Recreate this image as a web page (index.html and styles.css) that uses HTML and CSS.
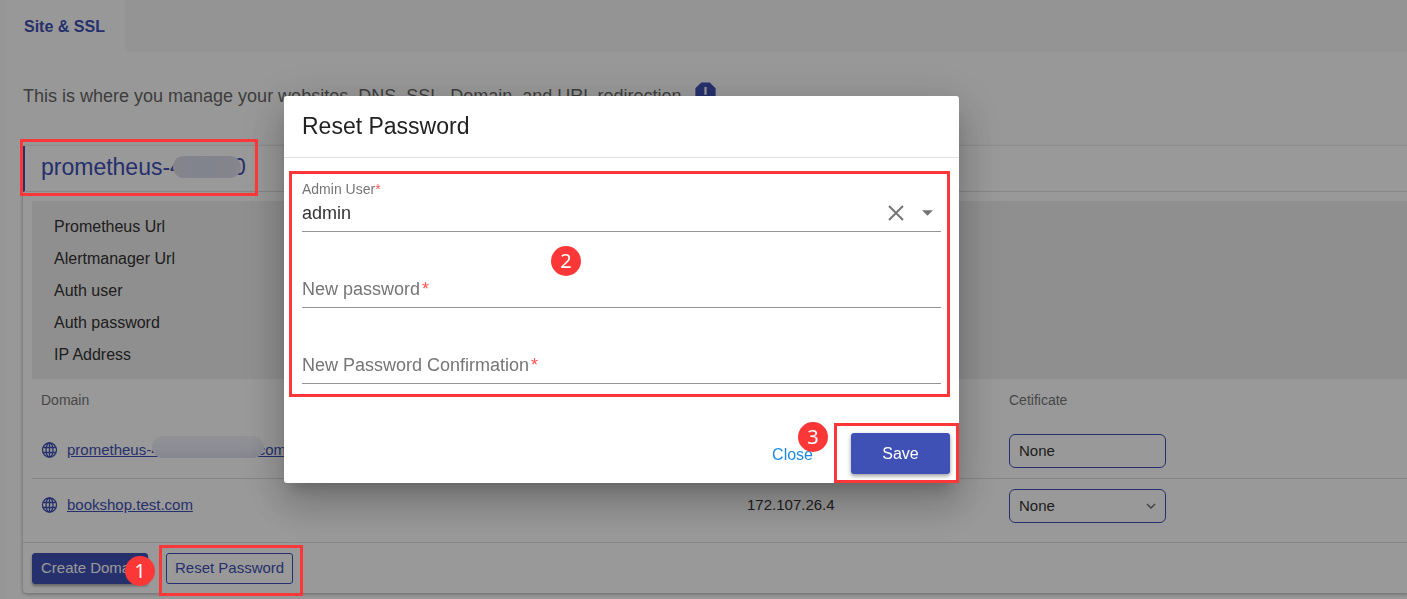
FILE: index.html
```html
<!DOCTYPE html>
<html lang="en">
<head>
<meta charset="utf-8">
<title>Site &amp; SSL</title>
<link rel="stylesheet" href="styles.css">
</head>
<body>
<svg class="sprite" aria-hidden="true">
  <symbol id="globe" viewBox="0 0 16 16">
    <g fill="none" stroke="currentColor" stroke-width="1.3">
      <circle cx="8" cy="8" r="7"/>
      <ellipse cx="8" cy="8" rx="3.5" ry="7"/>
      <path d="M8 1v14M1.6 5.5h12.8M1.6 10.5h12.8"/>
    </g>
  </symbol>
</svg>

<div class="page">
  <nav class="tabs"><a class="tab" href="#site">Site &amp; SSL</a></nav>
  <main class="content">
    <p class="intro">This is where you manage your websites, DNS, SSL, Domain, and URL redirection.
      <svg class="intro-icon" viewBox="0 0 24 24" aria-hidden="true"><path fill="currentColor" fill-rule="evenodd" d="M15.73 3H8.27L3 8.27v7.46L8.27 21h7.46L21 15.73V8.27L15.73 3zM12 18.3a1.3 1.3 0 1 1 0-2.6 1.3 1.3 0 0 1 0 2.6zM13 14h-2V7h2v7z"/></svg>
    </p>

    <section class="card">
      <header class="card-head">
        <h2 class="card-title">prometheus-4<span class="smudge smudge-title"></span>0</h2>
        <span class="mark mark-title"></span>
      </header>
      <div class="card-body">
        <ul class="info">
          <li>Prometheus Url</li>
          <li>Alertmanager Url</li>
          <li>Auth user</li>
          <li>Auth password</li>
          <li>IP Address</li>
        </ul>
        <table class="domains">
          <colgroup><col class="col-domain"><col class="col-ip"><col></colgroup>
          <thead>
            <tr><th>Domain</th><th></th><th>Cetificate</th></tr>
          </thead>
          <tbody>
            <tr>
              <td><div class="site"><svg class="globe"><use href="#globe"/></svg><a href="#prometheus">prometheus-4<span class="smudge smudge-link"></span>.com</a></div></td>
              <td></td>
              <td><select class="cert" aria-label="Certificate for prometheus"><option>None</option></select></td>
            </tr>
            <tr>
              <td><div class="site"><svg class="globe"><use href="#globe"/></svg><a href="#bookshop">bookshop.test.com</a></div></td>
              <td><div class="ip">172.107.26.4</div></td>
              <td><div class="cert-wrap"><select class="cert" aria-label="Certificate for bookshop.test.com"><option>None</option></select><svg class="chevron" viewBox="0 0 10 6" aria-hidden="true"><path d="M1 1l4 4 4-4" fill="none" stroke="currentColor" stroke-width="1.3"/></svg></div></td>
            </tr>
          </tbody>
        </table>
      </div>
      <footer class="card-foot">
        <div class="anchor">
          <button class="btn btn-fill" type="button">Create Domain</button>
          <span class="badge badge-one">1</span>
        </div>
        <div class="anchor">
          <button class="btn btn-line" type="button">Reset Password</button>
          <span class="mark mark-reset"></span>
        </div>
      </footer>
    </section>
  </main>
</div>

<div class="overlay">
  <form class="dialog" role="dialog" aria-labelledby="dialog-title">
    <h1 class="dialog-title" id="dialog-title">Reset Password</h1>
    <div class="dialog-body">
      <div class="field">
        <label class="label" for="user">Admin User<span class="star">*</span></label>
        <select class="control" id="user"><option>admin</option></select>
        <div class="field-icons">
          <button class="clear" type="button" aria-label="Clear"><svg viewBox="0 0 16 16"><path d="M1 1l14 14M15 1L1 15" stroke="currentColor" stroke-width="2"/></svg></button>
          <svg class="caret" viewBox="0 0 12 6" aria-hidden="true"><path d="M0 0h12L6 6z" fill="currentColor"/></svg>
        </div>
      </div>
      <div class="field">
        <label class="label label-rest" for="pass">New password<span class="star">*</span></label>
        <input class="control" id="pass" type="password">
      </div>
      <div class="field">
        <label class="label label-rest" for="confirm">New Password Confirmation<span class="star">*</span></label>
        <input class="control" id="confirm" type="password">
      </div>
      <span class="mark mark-fields"></span>
      <span class="badge badge-two">2</span>
    </div>
    <div class="dialog-foot">
      <div class="anchor">
        <button class="close" type="button">Close</button>
        <span class="badge badge-three">3</span>
      </div>
      <div class="anchor">
        <button class="save" type="submit">Save</button>
        <span class="mark mark-save"></span>
      </div>
    </div>
  </form>
</div>
</body>
</html>
```
FILE: styles.css
```css
:root {
  --primary: #3f51b5;
  --mark: #fc3737;
}

* { box-sizing: border-box; }

body {
  margin: 0;
  overflow: hidden;
  background: #fafafa;
  color: #333;
  font: 15px/20px "Liberation Sans", Arial, sans-serif;
}

h1, h2, p, ul { margin: 0; padding: 0; font-weight: 400; }
button, input, select { font: inherit; color: inherit; }
svg { display: block; }
.sprite { position: absolute; width: 0; height: 0; }

.page {
  min-height: 100vh;
  margin-left: 5px;
  background: #fefefe;
}

.tabs { display: flex; background: #f7f7f7; }

.tab {
  padding: 17px 20px 15px 19px;
  background: #fefefe;
  border-radius: 4px 4px 0 0;
  color: var(--primary);
  font-size: 16px;
  font-weight: 700;
  text-decoration: none;
}

.content { padding: 30px 0 6px 18px; }

.intro {
  display: flex;
  align-items: center;
  gap: 5px;
  height: 27px;
  margin-bottom: 37px;
  color: #666;
  font-size: 18px;
  white-space: nowrap;
}

.intro-icon { width: 27px; height: 27px; margin-bottom: 6px; color: var(--primary); }

.card {
  border-radius: 4px 0 0 4px;
  background: #fff;
  box-shadow: 0 1px 3px 1px rgba(0, 0, 0, .22);
}

.card-head {
  position: relative;
  padding: 6px 16px 8px;
  border-bottom: 1px solid #e0e0e0;
  border-left: 2px solid var(--primary);
}

.card-title {
  color: var(--primary);
  font-size: 23px;
  line-height: 31px;
}

.smudge {
  position: relative;
  display: inline-block;
  vertical-align: middle;
}

.smudge-title {
  width: 68px;
  height: 22px;
  margin: -4px -8px 0 -10px;
  border-radius: 11px;
  background: linear-gradient(90deg, #dcdeec, #d8dbeb 50%, #e0deec);
}

.smudge-link {
  width: 112px;
  height: 22px;
  margin: -8px -10px 0 -8px;
  border-radius: 11px;
  background: linear-gradient(#f2f2fa, #eaebf7 60%, #dcdff0);
}

.card-body { padding: 9px 0 9px 9px; }

.info {
  padding: 10px 22px 8px;
  background: #efefef;
  font-size: 16px;
  line-height: 32px;
  list-style: none;
}

.domains {
  width: 100%;
  border-collapse: separate;
  border-spacing: 0;
  table-layout: fixed;
}

.col-domain { width: 706px; }
.col-ip { width: 262px; }

.domains th {
  height: 45px;
  padding: 0 9px 3px;
  color: #777;
  font-size: 14px;
  font-weight: 400;
  text-align: left;
}

.domains td { height: 54px; padding: 0 9px; }
.domains tbody tr + tr td { border-top: 1px solid #dedede; height: 55px; }

.site { display: flex; align-items: center; gap: 9px; padding-bottom: 2px; white-space: nowrap; }
.ip { padding-bottom: 2px; }
.site a { color: var(--primary); }
.globe { width: 17px; height: 16px; color: var(--primary); }

.cert-wrap { position: relative; width: 157px; }

.cert {
  display: block;
  width: 157px;
  height: 34px;
  padding: 0 9px;
  border: 1px solid var(--primary);
  border-radius: 6px;
  background: none;
  appearance: none;
}

.chevron {
  position: absolute;
  top: 14px;
  right: 10px;
  width: 10px;
  height: 6px;
  color: #666;
}

.card-foot {
  display: flex;
  gap: 18px;
  padding: 10px 9px 9px;
  border-top: 1px solid #dedede;
}

.anchor { position: relative; }

.btn {
  display: block;
  height: 31px;
  padding: 0 8px 2px;
  border: 1px solid var(--primary);
  border-radius: 3px;
  white-space: nowrap;
}

.btn-fill {
  width: 116px;
  overflow: hidden;
  background: var(--primary);
  box-shadow: 0 2px 3px rgba(0, 0, 0, .35);
  color: #fff;
}

.btn-line { width: 127px; background: none; color: var(--primary); }

.overlay {
  position: fixed;
  inset: 0;
  display: flex;
  align-items: center;
  justify-content: center;
  padding: 0 164px 20px 0;
  background: rgba(0, 0, 0, .4);
}

.dialog {
  width: 675px;
  border-radius: 3px;
  background: #fff;
  box-shadow: 0 11px 15px -7px rgba(0, 0, 0, .2), 0 24px 38px 3px rgba(0, 0, 0, .14), 0 9px 46px 8px rgba(0, 0, 0, .12);
}

.dialog-title {
  padding: 15px 18px 16px;
  border-bottom: 1px solid #e0e0e0;
  color: #222;
  font-size: 23px;
  line-height: 30px;
}

.dialog-body {
  position: relative;
  display: grid;
  gap: 25px;
  padding: 23px 18px 0;
}

.field {
  position: relative;
  display: grid;
  grid-template-rows: 16px 24px;
  row-gap: 4px;
  padding-bottom: 6px;
  border-bottom: 1px solid #949494;
}

.label { color: #757575; font-size: 14px; line-height: 16px; }

.label-rest {
  grid-area: 2 / 1;
  font-size: 18px;
  line-height: 24px;
}

.star { color: #ff5252; }
.label-rest .star { margin-left: 2px; }

.control {
  grid-area: 2 / 1;
  width: 100%;
  padding: 0;
  border: 0;
  outline: 0;
  background: none;
  appearance: none;
  font-size: 18px;
  line-height: 24px;
}

.field-icons {
  grid-area: 2 / 1;
  display: flex;
  align-items: center;
  justify-self: end;
  gap: 18px;
  padding-right: 8px;
  color: #757575;
}

.clear { width: 16px; height: 16px; padding: 0; border: 0; background: none; }
.clear svg { width: 16px; height: 16px; color: #757575; }
.caret { width: 11px; height: 6px; }

.dialog-foot {
  display: flex;
  align-items: center;
  justify-content: flex-end;
  gap: 20px;
  padding: 49px 9px 9px;
  font-size: 16px;
}

.close { padding: 11px 18px 9px; border: 0; background: none; color: #1e88e5; }

.save {
  display: block;
  width: 99px;
  height: 41px;
  border: 0;
  border-radius: 3px;
  background: var(--primary);
  box-shadow: 0 2px 4px rgba(0, 0, 0, .4);
  color: #fff;
  font-weight: 500;
}

.mark {
  position: absolute;
  z-index: 2;
  border: 3px solid var(--mark);
  pointer-events: none;
}

.mark-title { top: -7px; left: -5px; width: 238px; height: 57px; }
.mark-reset { inset: -8px -10px -12px -7px; }
.mark-fields { inset: 13px 9px -13px 5px; }
.mark-save { inset: -10px -9px -9px -17px; }

.badge {
  position: absolute;
  z-index: 3;
  width: 30px;
  height: 30px;
  border-radius: 50%;
  background: var(--mark);
  color: #fff;
  font: 20px/30px "Noto Sans", sans-serif;
  text-align: center;
}

.badge-one { top: 3px; right: -7px; }
.badge-two { top: 88px; left: 267px; }
.badge-three { top: -12px; right: 3px; }
```
